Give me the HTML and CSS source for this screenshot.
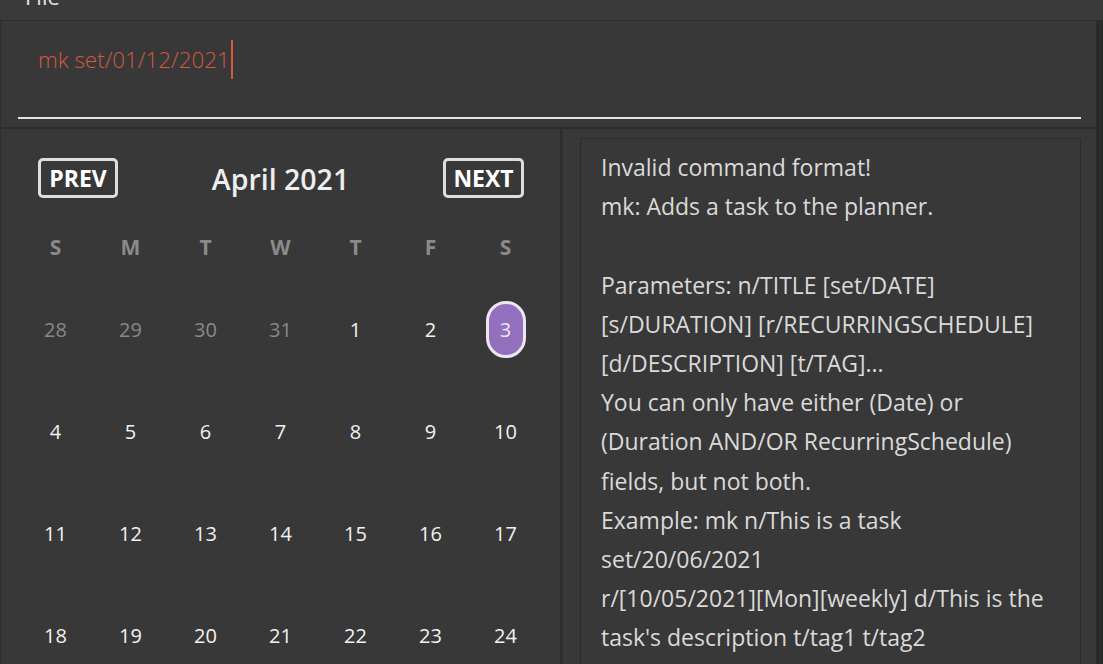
FILE: index.html
```html
<!DOCTYPE html>
<html lang="en">
<head>
<meta charset="utf-8">
<title>Planner</title>
<link rel="stylesheet" href="styles.css">
</head>
<body>
<div class="menubar"><span class="menu-item">File</span></div>
<div class="app">
  <div class="main">
    <div class="command">
      <div class="field"><span class="cmd-text">mk set/01/12/2021</span><span class="caret"></span></div>
    </div>
    <div class="lower">
      <div class="calendar">
        <div class="cal-head">
          <div class="nav-btn">PREV</div>
          <div class="month">April 2021</div>
          <div class="nav-btn next">NEXT</div>
        </div>
        <div class="grid">
          <div class="dow">S</div><div class="dow">M</div><div class="dow">T</div><div class="dow">W</div><div class="dow">T</div><div class="dow">F</div><div class="dow">S</div>
          <div class="day other">28</div><div class="day other">29</div><div class="day other">30</div><div class="day other">31</div><div class="day">1</div><div class="day">2</div><div class="day"><span class="today">3</span></div>
          <div class="day">4</div><div class="day">5</div><div class="day">6</div><div class="day">7</div><div class="day">8</div><div class="day">9</div><div class="day">10</div>
          <div class="day">11</div><div class="day">12</div><div class="day">13</div><div class="day">14</div><div class="day">15</div><div class="day">16</div><div class="day">17</div>
          <div class="day">18</div><div class="day">19</div><div class="day">20</div><div class="day">21</div><div class="day">22</div><div class="day">23</div><div class="day">24</div>
        </div>
      </div>
      <div class="result-panel">
        <div class="result">Invalid command format!<br>mk: Adds a task to the planner.<br><br>Parameters: n/TITLE [set/DATE]<br>[s/DURATION] [r/RECURRINGSCHEDULE]<br>[d/DESCRIPTION] [t/TAG]...<br>You can only have either (Date) or<br>(Duration AND/OR RecurringSchedule)<br>fields, but not both.<br>Example: mk n/This is a task<br>set/20/06/2021<br>r/[10/05/2021][Mon][weekly] d/This is the<br>task's description t/tag1 t/tag2</div>
      </div>
    </div>
  </div>
  <div class="strip"></div>
</div>
</body>
</html>
```
FILE: styles.css
```css
html, body {
  margin: 0;
  padding: 0;
}
body {
  width: 1103px;
  height: 664px;
  overflow: hidden;
  background: #383838;
  font-family: "Open Sans", "Noto Sans", sans-serif;
  color: #e8e8e8;
}
.menubar {
  height: 20px;
  background: #3a3a3a;
  border-bottom: 1px solid #2c2c2c;
  overflow: hidden;
}
.menu-item {
  display: block;
  margin-top: -14px;
  padding-left: 25px;
  font-size: 22px;
  line-height: 20px;
  color: #e6e6e6;
}
.app {
  display: flex;
  height: 643px;
}
.main {
  width: 1097px;
  display: flex;
  flex-direction: column;
}
.strip {
  width: 5px;
  background: #2c2c2c;
  border-left: 1px solid #222;
}
.command {
  height: 108px;
  box-sizing: border-box;
  padding: 19px 15px 0 17px;
  border-left: 1px solid #2e2e2e;
  border-right: 1px solid #2e2e2e;
  border-bottom: 2px solid #2c2c2c;
}
.field {
  height: 79px;
  box-sizing: border-box;
  border-bottom: 2px solid #e4e4e4;
  padding-left: 20px;
  display: flex;
  align-items: flex-start;
}
.cmd-text {
  font-size: 22.4px;
  font-weight: 300;
  line-height: 39px;
  color: #d4583c;
}
.caret {
  width: 2px;
  height: 39px;
  background: #d4583c;
  margin-left: 1px;
}
.lower {
  flex: 1;
  display: flex;
  min-height: 0;
}
.calendar {
  width: 562px;
  box-sizing: border-box;
  border-right: 2px solid #2c2c2c;
  border-left: 1px solid #2e2e2e;
}
.cal-head {
  display: flex;
  align-items: center;
  justify-content: space-between;
  padding: 28px 36px 0 37px;
}
.nav-btn {
  width: 80px;
  height: 40px;
  box-sizing: border-box;
  border: 3px solid #dedede;
  border-radius: 5px;
  display: flex;
  align-items: center;
  justify-content: center;
  font-size: 23px;
  font-weight: 700;
  color: #ffffff;
}
.nav-btn.next {
  width: 81px;
}
.month {
  padding-top: 3px;
  font-size: 28.5px;
  font-weight: 600;
  color: #eeeeee;
}
.grid {
  display: grid;
  grid-template-columns: repeat(7, 75px);
  grid-template-rows: 52px repeat(4, 102px);
  margin: 29px 0 0 17px;
}
.dow {
  height: 40px;
  display: flex;
  align-items: center;
  justify-content: center;
  font-size: 21px;
  font-weight: 700;
  color: #8a8a8a;
}
.day {
  display: flex;
  align-items: center;
  justify-content: center;
  font-size: 20px;
  font-weight: 500;
  color: #f2f2f2;
  padding-bottom: 1px;
}
.day.other {
  color: #888888;
}
.today {
  width: 40px;
  height: 57px;
  box-sizing: border-box;
  border: 3px solid #ebe6f0;
  border-radius: 20px;
  background: #9370be;
  color: #efe8f6;
  display: flex;
  align-items: center;
  justify-content: center;
}
.result-panel {
  flex: 1;
  padding: 9px 15px 0 17px;
  border-left: 1px solid #333;
  border-right: 1px solid #2e2e2e;
}
.result {
  height: 600px;
  box-sizing: border-box;
  border: 1px solid #2c2c2c;
  padding: 9px 10px 0 20px;
  font-size: 23px;
  line-height: 39.2px;
  color: #dadada;
  white-space: nowrap;
}
```
